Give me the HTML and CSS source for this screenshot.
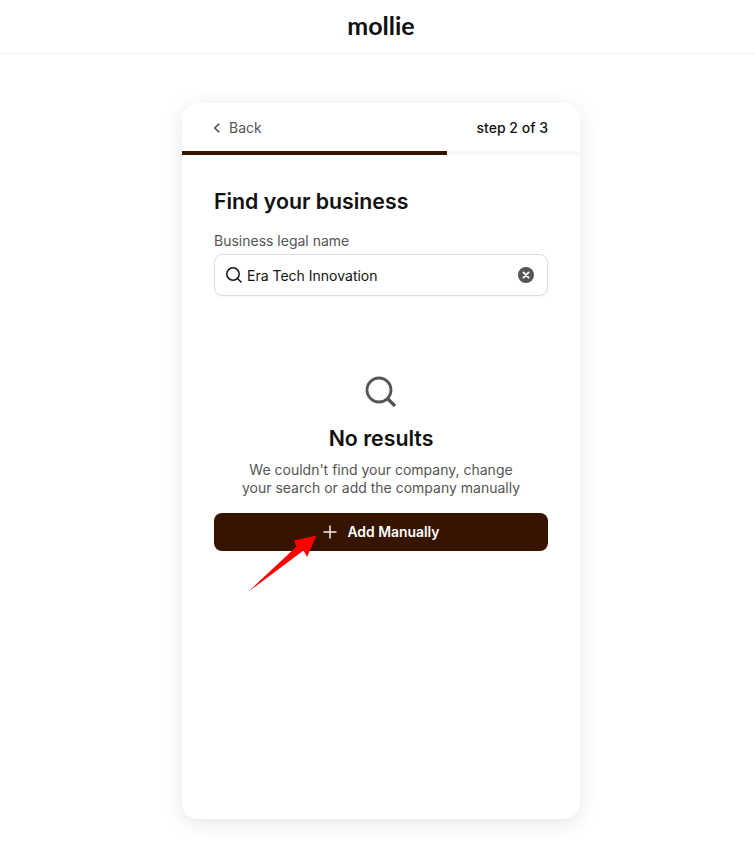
FILE: index.html
```html
<!DOCTYPE html>
<html lang="en">
<head>
<meta charset="utf-8">
<title>Mollie</title>
<link rel="stylesheet" href="styles.css">
</head>
<body>
<header class="topbar"><span class="logo">mollie</span></header>
<main class="page">
  <section class="card">
    <div class="card-head">
      <a class="back">
        <svg class="back-icon" width="16" height="16" viewBox="0 0 16 16" fill="none"><path d="M10.200 3.600 5.800 8l4.400 4.400" stroke="#555" stroke-width="1.600"/></svg>
        <span>Back</span>
      </a>
      <span class="step">step 2 of 3</span>
    </div>
    <div class="progress"><div class="progress-fill"></div></div>
    <div class="card-body">
      <h1 class="title">Find your business</h1>
      <label class="label">Business legal name</label>
      <div class="search">
        <svg width="18" height="18" viewBox="0 0 18 18" fill="none"><circle cx="8" cy="8" r="6.200" stroke="#111" stroke-width="1.500"/><path d="m12.500 12.500 4 4" stroke="#111" stroke-width="1.500"/></svg>
        <span class="search-text">Era Tech Innovation</span>
        <svg class="clear" width="16" height="16" viewBox="0 0 16 16" fill="none"><circle cx="8" cy="8" r="8" fill="#555"/><path d="m5.400 5.400 5.200 5.200m0-5.200-5.200 5.200" stroke="#fff" stroke-width="1.800" stroke-linecap="round"/></svg>
      </div>
      <div class="empty">
        <svg width="32" height="32" viewBox="0 0 32 32" fill="none"><circle cx="14" cy="14" r="12" stroke="#555" stroke-width="2.800"/><path d="m23 23 7 7" stroke="#555" stroke-width="3.400"/></svg>
        <h2 class="empty-title">No results</h2>
        <p class="empty-text">We couldn't find your company, change<br>your search or add the company manually</p>
      </div>
      <button class="add" type="button">
        <svg width="14" height="14" viewBox="0 0 14 14" fill="none"><path d="M7 .5v13M.5 7h13" stroke="#eee" stroke-width="1.500"/></svg>
        <span>Add Manually</span>
      </button>
    </div>
  </section>
</main>
<svg class="arrow" width="755" height="864" viewBox="0 0 755 864"><path d="M248.500 591.500 296.500 546.500 294 540.500 316.500 535.500 307 557 303.500 550.500Z" fill="#ff0000"/></svg>
</body>
</html>
```
FILE: styles.css
```css
* { box-sizing: border-box; }
html, body { margin: 0; height: 864px; overflow: hidden; }
body { position: relative; background: #fff; font-family: Inter, "Liberation Sans", sans-serif; color: #111; }
.topbar { height: 54px; border-bottom: 1px solid #f0f0f0; display: flex; align-items: center; justify-content: center; padding: 0 0 2px 7px; }
.logo { font-family: Lato, sans-serif; font-weight: 700; font-size: 25px; line-height: 1; color: #111; }
.page { padding: 49px 0 0 7px; display: flex; justify-content: center; }
.card { width: 398px; height: 716px; background: #fff; border-radius: 16px; box-shadow: 0 4px 20px rgba(0,0,0,.1); overflow: hidden; }
.card-head { height: 48px; display: flex; align-items: center; justify-content: space-between; padding: 1px 32px 0; }
.back { display: flex; align-items: center; gap: 4px; font-size: 14px; color: #555; }
.back-icon { flex: none; margin-left: -5px; }
.step { font-size: 14px; font-weight: 500; color: #111; }
.progress { height: 4px; background: #f7f7f7; }
.progress-fill { width: 265px; height: 4px; background: #361400; }
.card-body { padding: 32px 32px 0; }
.title { margin: 0; font-size: 21.3px; line-height: 28px; font-weight: 600; color: #111; }
.label { display: block; margin-top: 17px; font-size: 14px; line-height: 18px; color: #555; }
.search { margin-top: 4px; height: 42px; border: 1px solid #dedede; border-radius: 8px; display: flex; align-items: center; padding: 0 13px 0 10px; gap: 4px; box-shadow: 0 1px 2px rgba(0,0,0,.04); }
.search-text { flex: 1; font-size: 14px; line-height: 18px; padding-top: 1px; color: #111; }
.clear { flex: none; }
.empty { margin-top: 80px; display: flex; flex-direction: column; align-items: center; text-align: center; }
.empty-title { margin: 16px 0 0; font-size: 21.3px; line-height: 28px; font-weight: 600; color: #111; }
.empty-text { margin: 9px 0 0; font-size: 14px; line-height: 18px; color: #555; }
.add { margin-top: 16px; width: 100%; height: 38px; border: 0; padding: 0 0 0 1px; border-radius: 8px; background: #361400; color: #fff; font: 600 13.9px Inter, sans-serif; display: flex; align-items: center; justify-content: center; gap: 10px; }
.arrow { position: absolute; left: 0; top: 0; pointer-events: none; }
```
